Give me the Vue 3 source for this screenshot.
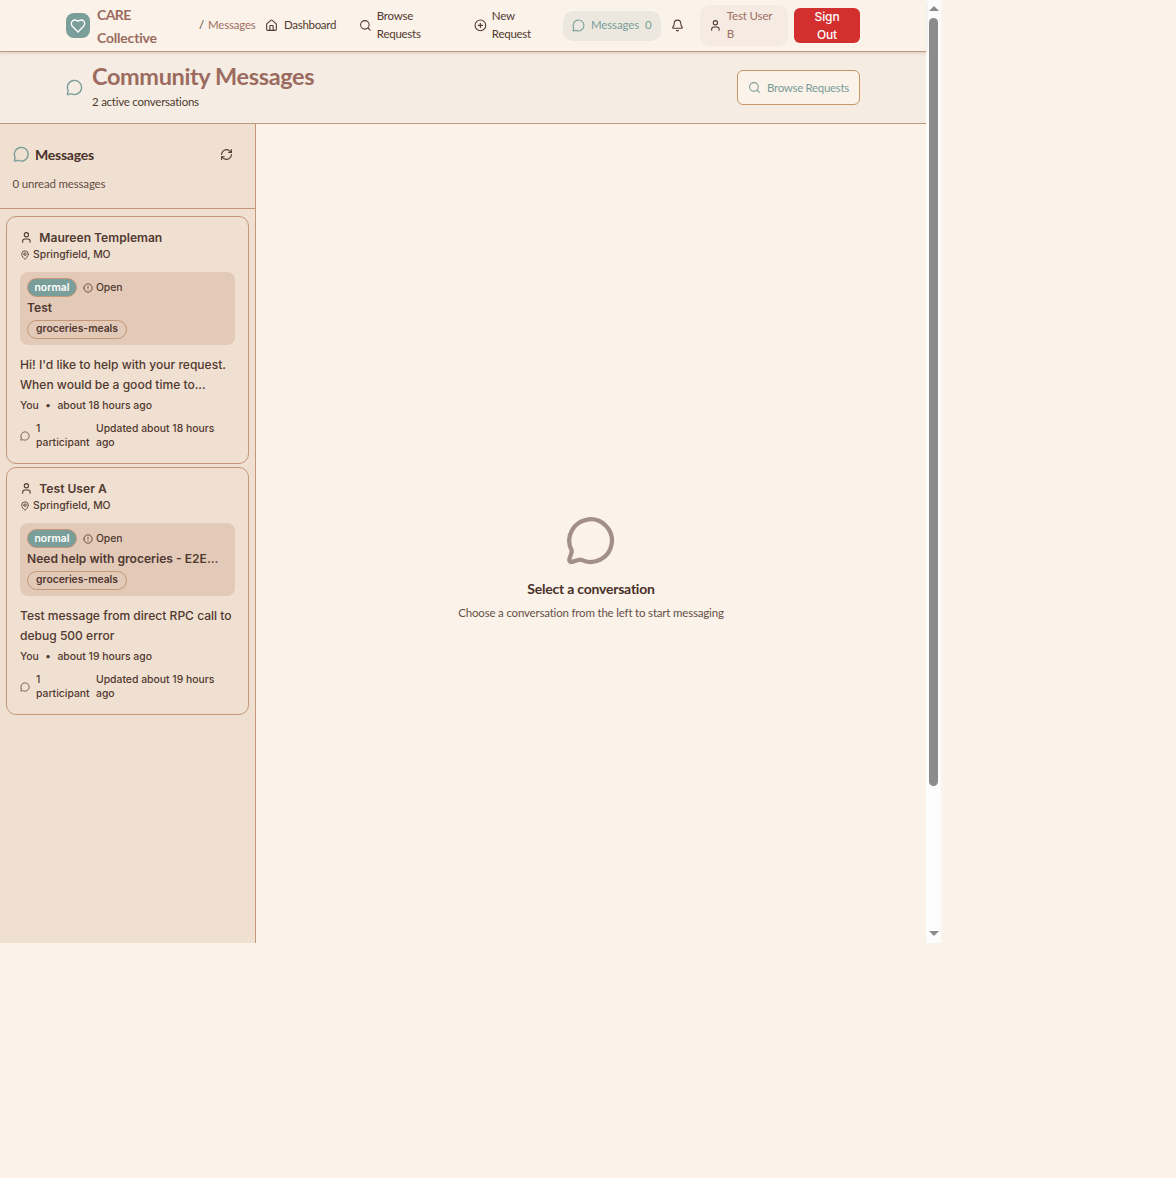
<script setup>
import { h } from 'vue'

const shapes = {
  message: ['M2.992 16.342a2 2 0 0 1 .094 1.167l-1.065 3.29a1 1 0 0 0 1.236 1.168l3.413-.998a2 2 0 0 1 1.099.092 10 10 0 1 0-4.777-4.719'],
  heart: ['M19 14c1.49-1.46 3-3.21 3-5.5A5.5 5.5 0 0 0 16.5 3c-1.76 0-3 .5-4.5 2-1.5-1.5-2.74-2-4.5-2A5.5 5.5 0 0 0 2 8.5c0 2.3 1.5 4.05 3 5.5l7 7Z'],
  home: ['M15 21v-8a1 1 0 0 0-1-1h-4a1 1 0 0 0-1 1v8', 'M3 10a2 2 0 0 1 .709-1.528l7-5.999a2 2 0 0 1 2.582 0l7 5.999A2 2 0 0 1 21 10v9a2 2 0 0 1-2 2H5a2 2 0 0 1-2-2z'],
  search: ['M3 11a8 8 0 1 0 16 0a8 8 0 1 0-16 0', 'm21 21-4.3-4.3'],
  plus: ['M2 12a10 10 0 1 0 20 0a10 10 0 1 0-20 0', 'M8 12h8', 'M12 8v8'],
  bell: ['M10.268 21a2 2 0 0 0 3.464 0', 'M3.262 15.326A1 1 0 0 0 4 17h16a1 1 0 0 0 .74-1.673C19.41 13.956 18 12.499 18 8A6 6 0 0 0 6 8c0 4.499-1.411 5.956-2.738 7.326'],
  user: ['M8 7a4 4 0 1 0 8 0a4 4 0 1 0-8 0', 'M19 21v-2a4 4 0 0 0-4-4H9a4 4 0 0 0-4 4v2'],
  refresh: ['M3 12a9 9 0 0 1 9-9 9.75 9.75 0 0 1 6.74 2.74L21 8', 'M21 3v5h-5', 'M21 12a9 9 0 0 1-9 9 9.75 9.75 0 0 1-6.74-2.74L3 16', 'M8 16H3v5'],
  pin: ['M20 10c0 4.993-5.539 10.193-7.399 11.799a1 1 0 0 1-1.202 0C9.539 20.193 4 14.993 4 10a8 8 0 0 1 16 0', 'M9 10a3 3 0 1 0 6 0a3 3 0 1 0-6 0'],
  alert: ['M2 12a10 10 0 1 0 20 0a10 10 0 1 0-20 0', 'M12 8v4', 'M12 16h.01'],
}

const Icon = (props) =>
  h('svg', { width: props.size, height: props.size, viewBox: '0 0 24 24', fill: 'none', stroke: 'currentColor', 'stroke-width': 2, 'stroke-linecap': 'round', 'stroke-linejoin': 'round', style: { flex: 'none', display: 'block' } },
    shapes[props.name].map((d) => h('path', { d })))
Icon.props = ['name', 'size']

const conversations = [
  { name: 'Maureen Templeman', title: 'Test', lines: ["Hi! I'd like to help with your request.", 'When would be a good time to...'], hours: 18 },
  { name: 'Test User A', title: 'Need help with groceries - E2E...', lines: ['Test message from direct RPC call to', 'debug 500 error'], hours: 19 },
]
</script>

<template>
  <div class="screen">
    <div class="page">
      <header class="topbar">
        <div class="logo"><Icon name="heart" :size="16" /></div>
        <div class="brand">CARE<br><span class="brand-second">Collective</span></div>
        <span class="slash">/</span>
        <span class="crumb">Messages</span>
        <a class="nav dash"><Icon name="home" :size="13" /><span>Dashboard</span></a>
        <a class="nav browse"><Icon name="search" :size="12.8" /><span>Browse<br>Requests</span></a>
        <a class="nav new"><Icon name="plus" :size="12.8" /><span>New<br>Request</span></a>
        <a class="nav active"><Icon name="message" :size="13" /><span>Messages</span><span class="count">0</span></a>
        <a class="bell"><Icon name="bell" :size="13" /></a>
        <div class="user"><Icon name="user" :size="12.8" /><span>Test User<br>B</span></div>
        <button class="signout">Sign<br>Out</button>
      </header>

      <section class="subhead">
        <Icon class="teal" name="message" :size="17" />
        <div class="heading">
          <h1>Community Messages</h1>
          <p>2 active conversations</p>
        </div>
        <button class="outline"><Icon name="search" :size="13" /><span>Browse Requests</span></button>
      </section>

      <main class="body">
        <aside class="sidebar">
          <div class="side-head">
            <div class="side-title">
              <Icon class="teal" name="message" :size="16.5" />
              <h2>Messages</h2>
              <Icon class="refresh" name="refresh" :size="13" />
            </div>
            <p>0 unread messages</p>
          </div>
          <div class="list">
            <article v-for="c in conversations" :key="c.name" class="card">
              <div class="name"><Icon name="user" :size="12.8" /><strong>{{ c.name }}</strong></div>
              <div class="place"><Icon name="pin" :size="10" /><span>Springfield, MO</span></div>
              <div class="request">
                <div class="status">
                  <span class="badge filled">normal</span>
                  <Icon name="alert" :size="10" />
                  <span class="open">Open</span>
                </div>
                <div class="title">{{ c.title }}</div>
                <span class="badge category">groceries-meals</span>
              </div>
              <div class="preview"><div v-for="l in c.lines" :key="l">{{ l }}</div></div>
              <div class="meta"><span>You</span><span class="dot">•</span><span>about {{ c.hours }} hours ago</span></div>
              <div class="foot">
                <Icon name="message" :size="10" />
                <span class="participants">1<br>participant</span>
                <span>Updated about {{ c.hours }} hours<br>ago</span>
              </div>
            </article>
          </div>
        </aside>
        <section class="empty">
          <Icon class="big" name="message" :size="51.2" />
          <h3>Select a conversation</h3>
          <p>Choose a conversation from the left to start messaging</p>
        </section>
      </main>
    </div>
    <div class="scroll">
      <i class="up"></i>
      <i class="thumb"></i>
      <i class="down"></i>
    </div>
  </div>
</template>

<style>
body { background: #fbf2e9; }
</style>

<style scoped>
* { box-sizing: border-box; }
h1, h2, h3, p { margin: 0; }
button { font: inherit; padding: 0; }
.screen { display: flex; width: 941px; height: 943px; font-family: Lato, sans-serif; color: #503930; white-space: nowrap; }
.page { width: 926px; height: 943px; display: flex; flex-direction: column; }
.teal { color: #7a9e99; }

.topbar { height: 52px; flex: none; display: flex; align-items: center; padding-left: 66px; border-bottom: 1px solid #c39778; box-shadow: 0 1px 3px rgba(72, 49, 41, 0.2); position: relative; background: #fbf2e9; font-size: 11.5px; line-height: 18px; }
.topbar span { padding-bottom: 1px; }
.logo { width: 24px; height: 25px; border-radius: 8px; background: #7a9e99; color: #fff; display: flex; align-items: center; justify-content: center; }
.brand { margin-left: 7px; width: 102px; font-size: 14px; line-height: 23px; font-weight: 700; color: #9b6b60; letter-spacing: -0.6px; }
.brand-second { letter-spacing: -0.2px; }
.slash { width: 9px; }
.crumb { width: 57px; color: #9f6f64; letter-spacing: -0.2px; }
.nav { display: flex; align-items: center; gap: 6px; }
.dash { width: 94px; letter-spacing: -0.3px; }
.browse { width: 115px; letter-spacing: -0.25px; gap: 5px; }
.new { width: 89px; letter-spacing: -0.25px; gap: 5px; }
.active { width: 98px; height: 30px; border-radius: 10px; background: #ede8df; color: #7a9e99; padding-left: 9px; letter-spacing: -0.15px; }
.bell { margin-left: 10px; width: 29px; }
.user { width: 88px; height: 41px; border-radius: 10px; background: #f5ebe2; display: flex; align-items: center; gap: 5px; padding-left: 9px; }
.user span { color: #9f6f64; letter-spacing: -0.15px; }
.signout { margin-left: 6px; width: 66px; height: 35px; border: 0; border-radius: 6px; background: #d32f2f; color: #fff; font: 500 12px/18px Inter, sans-serif; letter-spacing: -0.1px; }

.subhead { height: 72px; flex: none; background: #f5ede3; border-bottom: 1px solid #c39778; display: flex; align-items: center; padding: 0 66px 0 65.5px; }
.heading { margin-left: 9.5px; flex: 1; }
h1 { font-size: 23.5px; line-height: 31px; margin-top: -3px; font-weight: 700; color: #9b6b60; letter-spacing: -0.38px; }
.heading p { margin-top: 1px; font-size: 11.5px; line-height: 18px; letter-spacing: -0.24px; }
.outline { width: 123px; height: 35px; border: 1px solid #c39768; border-radius: 6px; background: #fbf2e9; color: #7a9e99; display: flex; align-items: center; justify-content: center; gap: 6px; font-size: 11.5px; letter-spacing: -0.32px; }
.outline span { padding-bottom: 1px; }

.body { flex: 1; display: flex; }
.sidebar { width: 256px; background: #f0e0d1; border-right: 1px solid #c39778; }
.side-head { height: 85px; border-bottom: 1px solid #c39778; padding: 19px 22px 0 12.5px; }
.side-title { display: flex; align-items: center; height: 23px; }
h2 { flex: 1; margin-left: 6px; font-size: 14px; font-weight: 700; letter-spacing: -0.25px; color: #483129; }
.side-head p { margin-top: 9px; font-size: 11.5px; line-height: 18px; opacity: 0.88; letter-spacing: -0.17px; }
.list { padding: 7px 6px; display: flex; flex-direction: column; gap: 3px; font-family: Inter, sans-serif; font-weight: 500; }
.card { height: 248px; border: 1px solid #c39778; border-radius: 10px; padding: 12px 13px; }
.name { display: flex; align-items: center; gap: 6.5px; height: 17px; font-size: 12.1px; }
.name strong { font-weight: 600; }
.place { display: flex; align-items: center; gap: 3px; height: 17px; font-size: 10.4px; }
.request { margin-top: 9px; height: 73px; padding: 6px 7px; border-radius: 8px; background: #e3c9b8; }
.status { display: flex; align-items: center; height: 19px; font-size: 10.4px; letter-spacing: -0.1px; }
.badge { display: inline-block; height: 19px; border: 1px solid #c39778; border-radius: 10px; font-size: 10.4px; font-weight: 600; line-height: 17px; text-align: center; letter-spacing: 0; }
.filled { width: 50px; margin-right: 6px; background: #7a9e99; color: #fff; }
.open { margin-left: 3px; }
.title { font-size: 12.1px; line-height: 18px; margin-top: 2px; font-weight: 600; }
.category { display: block; width: 100px; margin-top: 3px; line-height: 16px; letter-spacing: -0.05px; }
.preview { margin-top: 10px; font-size: 12.05px; line-height: 20px; }
.meta { margin-top: 3px; display: flex; font-size: 10.4px; line-height: 15px; }
.dot { margin: 0 6.5px; }
.foot { margin-top: 9px; display: flex; align-items: center; font-size: 10.4px; line-height: 14px; }
.foot svg { opacity: 0.85; }
.participants { width: 60px; margin-left: 6px; }

.empty { flex: 1; display: flex; flex-direction: column; align-items: center; padding-top: 391px; }
.big { color: #a28f87; }
h3 { margin-top: 11px; font-size: 14px; line-height: 23px; font-weight: 700; letter-spacing: -0.22px; color: #483129; }
.empty p { margin-top: 4px; font-size: 11.5px; line-height: 18px; opacity: 0.88; letter-spacing: -0.19px; }

.scroll { width: 15px; background: #fcfcfc; display: flex; flex-direction: column; align-items: center; }
.scroll i { flex: none; }
.up, .down { border: 5px solid transparent; height: 0; width: 0; }
.up { margin-top: 6px; border-top: 0; border-bottom-color: #8b8b8b; }
.down { margin-top: auto; margin-bottom: 7px; border-bottom: 0; border-top-color: #8b8b8b; }
.thumb { margin-top: 7px; width: 9px; height: 768px; border-radius: 5px; background: #8b8b8b; }
</style>
